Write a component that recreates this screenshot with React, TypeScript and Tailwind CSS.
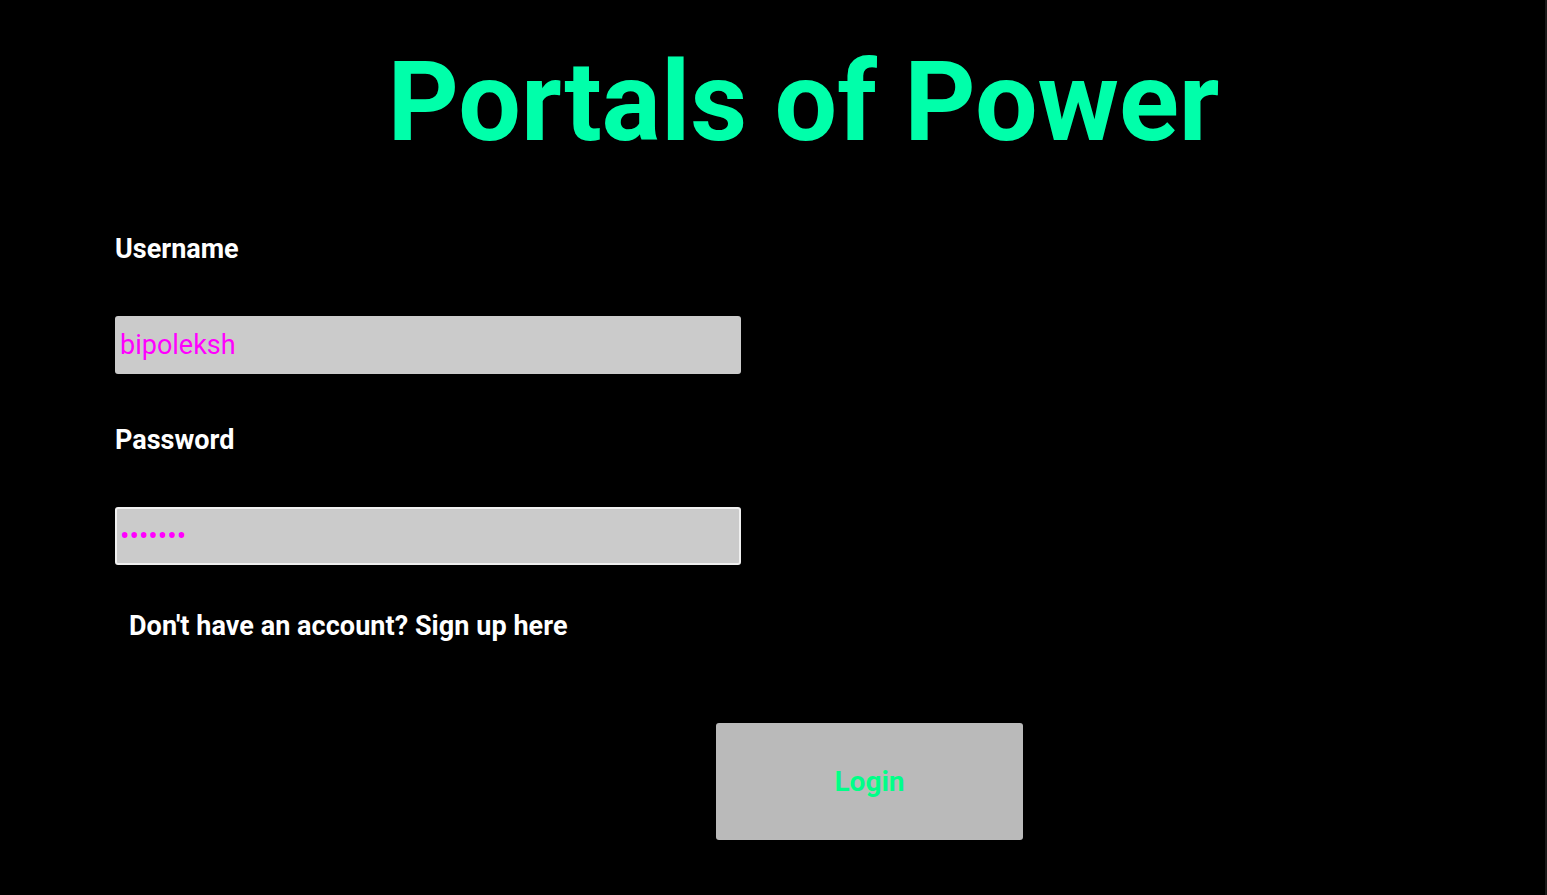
import React from "react";

export default function App() {
  return (
    <div
      className="w-full h-[895px] bg-black overflow-hidden flex"
      style={{ fontFamily: "Roboto, 'Noto Sans', sans-serif" }}
    >
      <div className="flex-1 flex flex-col">
        <h1 className="text-[111px] leading-none font-bold text-[#00ffaa] text-center pl-[62px] mt-[47px] tracking-[-0.1px]">
          Portals of Power
        </h1>
        <div className="pl-[115px] mt-[78px] flex flex-col">
          <label className="text-white text-[27px] font-bold leading-none h-[27px]">Username</label>
          <div className="mt-[53px] w-[626px] h-[58px] bg-[#cbcbcb] rounded-[3px] flex items-center pl-[5px]">
            <span className="text-[#ff00ff] text-[27px] leading-none">bipoleksh</span>
          </div>
          <label className="mt-[53px] text-white text-[27px] font-bold leading-none h-[27px]">Password</label>
          <div className="mt-[53px] w-[626px] h-[58px] bg-[#cbcbcb] rounded-[3px] border-2 border-[#f0f0f0] flex items-center pl-[3px]">
            <span className="text-[#ff00ff] text-[28px] leading-none">•••••••</span>
          </div>
          <p className="mt-[48px] ml-[14px] text-white text-[27px] font-bold leading-none tracking-[0.05px]">
            Don't have an account? Sign up here
          </p>
          <div className="mt-[83px] ml-[601px] w-[307px] h-[117px] bg-[#bababa] rounded-[3px] flex items-center justify-center">
            <span className="text-[#00ff88] text-[28px] font-bold leading-none">Login</span>
          </div>
        </div>
      </div>
      <div className="w-[2px] h-full bg-[#1a1a1a]" />
    </div>
  );
}
